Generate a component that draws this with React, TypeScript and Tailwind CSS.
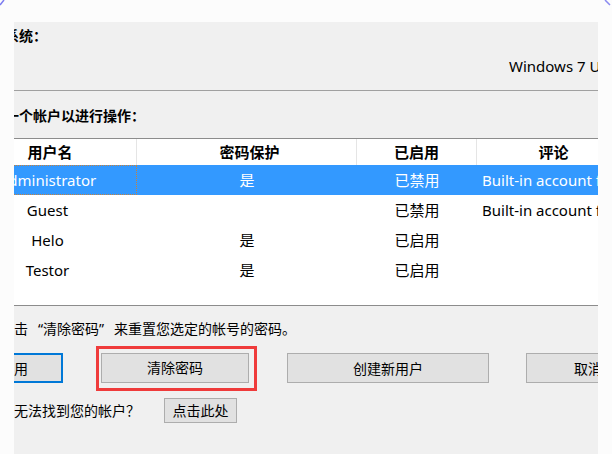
const FONT = "font-['Noto_Sans','Noto_Sans_CJK_SC',sans-serif]";

type Row = { name: string; pwd: string; state: string; note: string };

const ROWS: Row[] = [
  { name: "Administrator", pwd: "是", state: "已禁用", note: "Built-in account for administering the computer/domain" },
  { name: "Guest", pwd: "", state: "已禁用", note: "Built-in account for guest access to the computer/domain" },
  { name: "Helo", pwd: "是", state: "已启用", note: "" },
  { name: "Testor", pwd: "是", state: "已启用", note: "" },
];

function Btn({ label, w, focused = false }: { label: string; w: string; focused?: boolean }) {
  return (
    <div
      className={`${w} h-[30px] shrink-0 flex items-center justify-center bg-[#e1e1e1] text-[14px] text-black ${
        focused ? "border-2 border-[#0078d7]" : "border border-[#adadad]"
      }`}
    >
      {label}
    </div>
  );
}

export default function App() {
  return (
    <div className={`${FONT} relative w-[612px] h-[454px] bg-[#fcfcfc] overflow-hidden pt-[22px] pl-[14px]`}>
      {/* stray corner marks from the capture */}
      <svg className="absolute left-0 top-0" width="6" height="6" viewBox="0 0 6 6">
        <path d="M0 5 L4 0" stroke="#7b7bf0" strokeWidth="1.5" />
      </svg>
      <svg className="absolute right-0 top-0" width="8" height="6" viewBox="0 0 8 6">
        <path d="M1 0 L6 5" stroke="#8b8bf0" strokeWidth="1.5" />
      </svg>

      <div className="w-[584px] h-[432px] bg-[#f0f0f0] overflow-hidden flex flex-col text-black">
        <div className="mt-[4px] ml-[-37px] h-[20px] leading-[20px] text-[14px] font-semibold whitespace-nowrap">
          操作系统：
        </div>
        <div className="mt-[10px] ml-[495px] h-[20px] leading-[20px] text-[15px] whitespace-nowrap">
          Windows 7 Ultimate
        </div>
        <div className="mt-[14px] h-px bg-[#a0a0a0] shrink-0" />
        <div className="mt-[15px] ml-[-37px] h-[20px] leading-[20px] text-[14px] font-semibold whitespace-nowrap">
          选择一个帐户以进行操作：
        </div>

        {/* account list */}
        <div className="mt-[12px] bg-white border-y border-[#8c8c8c] shrink-0">
          <div className="ml-[-56px] w-[672px] text-[15px]">
            <div className="flex h-[26px] font-semibold">
              <div className="w-[179px] shrink-0 flex items-center justify-center pl-[6px] border-r border-[#e5e5e5]">用户名</div>
              <div className="w-[220px] shrink-0 flex items-center justify-center pl-[6px] border-r border-[#e5e5e5]">密码保护</div>
              <div className="w-[120px] shrink-0 flex items-center justify-center border-r border-[#e5e5e5]">已启用</div>
              <div className="w-[153px] shrink-0 flex items-center justify-center">评论</div>
            </div>
            {ROWS.map((r, i) => {
              const sel = i === 0;
              return (
                <div key={r.name} className={`flex h-[30px] ${sel ? "bg-[#3399ff] text-white" : ""}`}>
                  <div
                    className={`w-[179px] shrink-0 flex items-center justify-center whitespace-nowrap ${
                      sel ? "border border-dotted border-[#c8823c]" : ""
                    }`}
                  >
                    {r.name}
                  </div>
                  <div className="w-[220px] shrink-0 flex items-center justify-center">{r.pwd}</div>
                  <div className="w-[120px] shrink-0 flex items-center justify-center">{r.state}</div>
                  <div className="w-[153px] shrink-0 flex items-center pl-[5px] whitespace-nowrap overflow-hidden">
                    {r.note}
                  </div>
                </div>
              );
            })}
            <div className="h-[20px]" />
          </div>
        </div>

        <div className="mt-[13px] ml-[-14px] h-[20px] leading-[20px] text-[14px] whitespace-nowrap">
          单击<span className="inline-block w-[15px] text-right">“</span>清除密码
          <span className="inline-block w-[15px] text-left">”</span>来重置您选定的帐号的密码。
        </div>

        {/* action buttons */}
        <div className="mt-[7px] ml-[-49px] flex items-center h-[44px]">
          <Btn label="禁用" w="w-[98px]" focused />
          <div className="ml-[33px] shrink-0 border-[3px] border-[#ef3b3b] pl-[2px] pr-[5px] pt-[4px] pb-[5px]">
            <Btn label="清除密码" w="w-[148px]" />
          </div>
          <div className="ml-[30px]">
            <Btn label="创建新用户" w="w-[202px]" />
          </div>
          <div className="ml-[37px]">
            <Btn label="取消" w="w-[124px]" />
          </div>
        </div>

        <div className="mt-[8px] flex items-center h-[25px] text-[14px]">
          <span className="whitespace-nowrap">无法找到您的帐户？</span>
          <div className="ml-[24px] w-[73px] h-[25px] flex items-center justify-center bg-[#e1e1e1] border border-[#adadad]">
            点击此处
          </div>
        </div>
      </div>
    </div>
  );
}
